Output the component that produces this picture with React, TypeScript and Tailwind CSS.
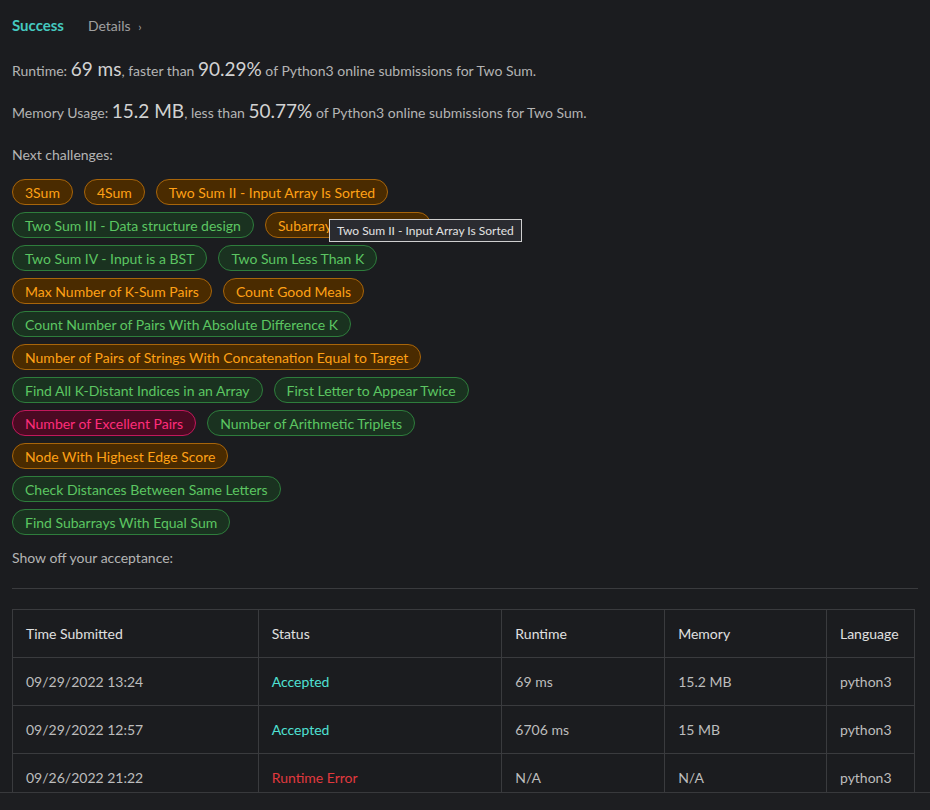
import React from "react";

type Tone = "orange" | "green" | "pink";

const toneClass: Record<Tone, string> = {
  orange: "bg-[#4a2b00] border-[#a8650a] text-[#ffa116]",
  green: "bg-[#1a3220] border-[#2e7d3c] text-[#5cc662]",
  pink: "bg-[#4a0a22] border-[#c2185b] text-[#ff2d7a]",
};

const rows: { name: string; tone: Tone; tip?: boolean }[][] = [
  [
    { name: "3Sum", tone: "orange" },
    { name: "4Sum", tone: "orange" },
    { name: "Two Sum II - Input Array Is Sorted", tone: "orange" },
  ],
  [
    { name: "Two Sum III - Data structure design", tone: "green" },
    { name: "Subarray Sum Equals K", tone: "orange", tip: true },
  ],
  [
    { name: "Two Sum IV - Input is a BST", tone: "green" },
    { name: "Two Sum Less Than K", tone: "green" },
  ],
  [
    { name: "Max Number of K-Sum Pairs", tone: "orange" },
    { name: "Count Good Meals", tone: "orange" },
  ],
  [{ name: "Count Number of Pairs With Absolute Difference K", tone: "green" }],
  [{ name: "Number of Pairs of Strings With Concatenation Equal to Target", tone: "orange" }],
  [
    { name: "Find All K-Distant Indices in an Array", tone: "green" },
    { name: "First Letter to Appear Twice", tone: "green" },
  ],
  [
    { name: "Number of Excellent Pairs", tone: "pink" },
    { name: "Number of Arithmetic Triplets", tone: "green" },
  ],
  [{ name: "Node With Highest Edge Score", tone: "orange" }],
  [{ name: "Check Distances Between Same Letters", tone: "green" }],
  [{ name: "Find Subarrays With Equal Sum", tone: "green" }],
];

const submissions = [
  { time: "09/29/2022 13:24", status: "Accepted", runtime: "69 ms", memory: "15.2 MB", lang: "python3" },
  { time: "09/29/2022 12:57", status: "Accepted", runtime: "6706 ms", memory: "15 MB", lang: "python3" },
  { time: "09/26/2022 21:22", status: "Runtime Error", runtime: "N/A", memory: "N/A", lang: "python3" },
];

const Tag = ({ name, tone, tip }: { name: string; tone: Tone; tip?: boolean }) => (
  <div className="relative">
    <span
      className={`flex h-[26px] items-center whitespace-nowrap rounded-full border px-3 text-[14px] ${toneClass[tone]}`}
    >
      {name}
    </span>
    {tip && (
      <div className="absolute left-[64px] top-[7px] z-10 flex h-[23px] items-center whitespace-nowrap border border-[#cfcfcf] bg-[#2a2b30] px-[7px] text-[12px] text-[#e2e2e2]">
        Two Sum II - Input Array Is Sorted
      </div>
    )}
  </div>
);

export default function App() {
  return (
    <div
      className="flex h-[810px] w-[930px] flex-col overflow-hidden bg-[#1b1c1f] text-[14px] text-[#b4b4b4]"
      style={{ fontFamily: "Lato, 'Open Sans', sans-serif" }}
    >
      <div className="h-[793px] shrink-0 overflow-hidden border-b border-[#38393c] px-3">
        <div className="mt-[15px] flex h-[20px] items-center gap-[24px]">
          <span className="text-[15px] font-bold text-[#45c9bf]">Success</span>
          <span className="text-[14px] text-[#a0a0a0]">
            Details <span className="ml-1 text-[12px]">›</span>
          </span>
        </div>

        <p className="mt-[20px] flex h-[26px] items-baseline">
          Runtime:&nbsp;<span className="text-[19px] text-[#d2d2d2]">69 ms</span>, faster than&nbsp;
          <span className="text-[19px] text-[#d2d2d2]">90.29%</span>&nbsp;of Python3 online submissions for Two Sum.
        </p>
        <p className="mt-[16px] flex h-[26px] items-baseline">
          Memory Usage:&nbsp;<span className="text-[19px] text-[#d2d2d2]">15.2 MB</span>, less than&nbsp;
          <span className="text-[19px] text-[#d2d2d2]">50.77%</span>&nbsp;of Python3 online submissions for Two Sum.
        </p>

        <p className="mt-[22px] h-[20px] leading-[20px]">Next challenges:</p>

        <div className="mt-[14px] flex flex-col gap-[7px]">
          {rows.map((row, i) => (
            <div key={i} className="flex gap-[11px]">
              {row.map((t) => (
                <Tag key={t.name} {...t} />
              ))}
            </div>
          ))}
        </div>

        <p className="mt-[13px] h-[20px] leading-[20px]">Show off your acceptance:</p>

        <div className="mt-[20px] border-t border-[#3a3b3e]" />

        <table className="mt-[20px] w-[903px] border-collapse text-left text-[14px]">
          <colgroup>
            <col className="w-[246px]" />
            <col className="w-[244px]" />
            <col className="w-[163px]" />
            <col className="w-[162px]" />
            <col className="w-[88px]" />
          </colgroup>
          <thead>
            <tr className="h-[48px] text-[#e0e0e0]">
              {["Time Submitted", "Status", "Runtime", "Memory", "Language"].map((h) => (
                <th key={h} className="border border-[#3a3b3e] px-[13px] font-normal">
                  {h}
                </th>
              ))}
            </tr>
          </thead>
          <tbody>
            {submissions.map((s) => (
              <tr key={s.time} className="h-[48px] text-[#bdbdbd]">
                <td className="border border-[#3a3b3e] px-[13px]">{s.time}</td>
                <td
                  className={`border border-[#3a3b3e] px-[13px] ${
                    s.status === "Accepted" ? "text-[#4fe0d3]" : "text-[#e0393e]"
                  }`}
                >
                  {s.status}
                </td>
                <td className="border border-[#3a3b3e] px-[13px]">{s.runtime}</td>
                <td className="border border-[#3a3b3e] px-[13px]">{s.memory}</td>
                <td className="border border-[#3a3b3e] px-[13px]">{s.lang}</td>
              </tr>
            ))}
          </tbody>
        </table>
      </div>
      <div className="flex-1 bg-[#1d1e21]" />
    </div>
  );
}
